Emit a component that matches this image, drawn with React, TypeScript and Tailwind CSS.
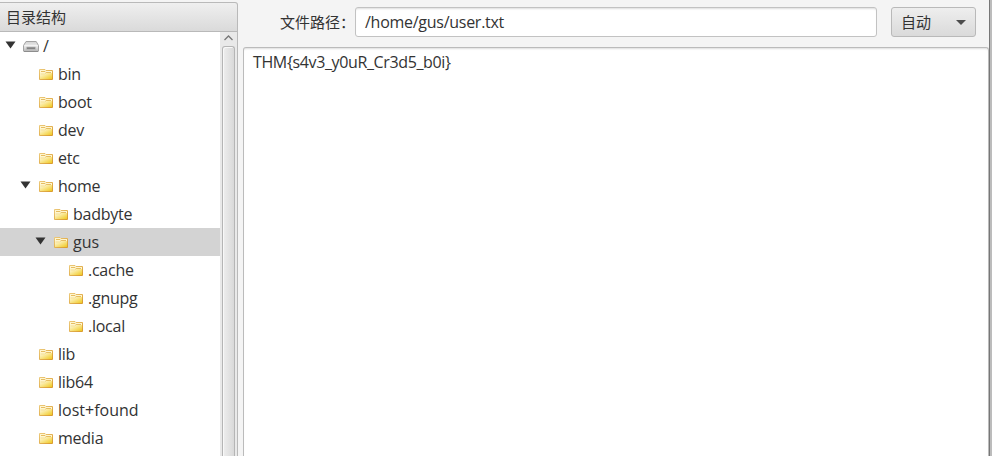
type Entry = { name: string; depth: number; open?: boolean; selected?: boolean; drive?: boolean; wide?: boolean };

const entries: Entry[] = [
  { name: "/", depth: 0, open: true, drive: true },
  { name: "bin", depth: 1 },
  { name: "boot", depth: 1 },
  { name: "dev", depth: 1 },
  { name: "etc", depth: 1 },
  { name: "home", depth: 1, open: true },
  { name: "badbyte", depth: 2 },
  { name: "gus", depth: 2, open: true, selected: true, wide: true },
  { name: ".cache", depth: 3 },
  { name: ".gnupg", depth: 3 },
  { name: ".local", depth: 3 },
  { name: "lib", depth: 1 },
  { name: "lib64", depth: 1 },
  { name: "lost+found", depth: 1, wide: true },
  { name: "media", depth: 1 },
];

const indents = ["pl-[5px]", "pl-[20px]", "pl-[35px]", "pl-[50px]"];

function FolderIcon() {
  return (
    <svg width="16" height="14" viewBox="0 0 16 14" className="mr-[4px] shrink-0">
      <defs>
        <linearGradient id="folder" x1="0" y1="0" x2="1" y2="1">
          <stop offset="0" stopColor="#fffbe2" />
          <stop offset=".45" stopColor="#f9e68f" />
          <stop offset="1" stopColor="#efc820" />
        </linearGradient>
        <linearGradient id="folderEdge" x1="0" y1="0" x2="1" y2="1">
          <stop offset="0" stopColor="#ecc97a" />
          <stop offset="1" stopColor="#d99a2c" />
        </linearGradient>
      </defs>
      <path d="M1.5 12.5V2.5h5.5l1 1h6.5v9z" fill="#fff6d0" stroke="url(#folderEdge)" />
      <path d="M3 4.5h4l1 1h5" fill="none" stroke="#e6bd62" />
      <path d="M2 12V7.5h5L8.5 6H14v6z" fill="url(#folder)" />
      <path d="M2.5 7h4.3L8.2 5.8" fill="none" stroke="#f3dc8c" />
    </svg>
  );
}

function DriveIcon() {
  return (
    <svg width="17" height="14" viewBox="0 0 17 14" className="mr-[3px] shrink-0">
      <defs>
        <linearGradient id="drive" x1="0" y1="0" x2="0" y2="1">
          <stop offset="0" stopColor="#d2d2d2" />
          <stop offset=".45" stopColor="#ebebeb" />
          <stop offset="1" stopColor="#b4b4b4" />
        </linearGradient>
      </defs>
      <path d="M3 2.5h10.2l2.3 4v5.5l-.5 .5H.9l-.4-.5V6.5z" fill="url(#drive)" stroke="#a3a3a3" />
      <path d="M1.5 6.5h13.2" stroke="#f3f3f3" />
      <path d="M3.5 8h9v2.5h-9z" fill="#838383" stroke="#c2c2c2" strokeWidth=".6" />
      <path d="M1 12.5h14.2" stroke="#8d8d8d" />
    </svg>
  );
}

function TreeRow({ entry }: { entry: Entry }) {
  return (
    <li className={`flex h-7 items-center ${indents[entry.depth]} ${entry.selected ? "bg-[#d3d3d3]" : ""}`}>
      <span className={`flex w-[18px] shrink-0 ${entry.drive ? "pb-[3px]" : "pb-[2px]"}`}>
        {entry.open && (
          <svg width="11" height="8" viewBox="0 0 11 8"><path d="M.5 .5h10l-5 7z" fill="#333" /></svg>
        )}
      </span>
      {entry.drive ? <DriveIcon /> : <FolderIcon />}
      <span className={`whitespace-pre text-[16px] leading-7 ${entry.wide ? "" : "tracking-[-0.25px]"}`}>{entry.name}</span>
    </li>
  );
}

export default function App() {
  return (
    <div className="flex h-[456px] w-[992px] overflow-hidden bg-[#f4f4f4] font-['Open_Sans','Noto_Sans_CJK_SC',sans-serif] text-[15px] text-[#333]">
      <aside className="flex w-[238px] shrink-0 flex-col pt-[2px]">
        <header className="h-[30px] shrink-0 rounded-tr-[3px] border-t border-r border-b border-[#b9b9b9] bg-linear-to-b from-[#efefef] to-[#dadada] pl-[6px] leading-[28px]">
          目录结构
        </header>
        <div className="flex min-h-0 flex-1 border-r border-[#b9b9b9]">
          <ul className="w-[220px] overflow-hidden bg-white">
            {entries.map((entry) => <TreeRow key={entry.name} entry={entry} />)}
          </ul>
          <div className="flex w-[17px] flex-col bg-[#e9e9e9] px-[2px]">
            <svg width="13" height="14" viewBox="0 0 13 14" className="shrink-0">
              <path d="M2.5 8l4-4 4 4" fill="none" stroke="#777" strokeWidth="1.3" />
            </svg>
            <div className="flex-1 rounded-t-[3px] border border-b-0 border-[#b5b5b5] bg-linear-to-r from-[#eeeeee] to-[#d9d9d9] shadow-[inset_1px_1px_0_#f8f8f8]" />
          </div>
        </div>
      </aside>
      <main className="flex flex-1 flex-col pl-[5px]">
        <div className="flex h-[47px] shrink-0 pt-[7px]">
          <label className="w-[112px] shrink-0 pl-[37px] leading-[30px] whitespace-nowrap">文件路径：</label>
          <div className="h-[30px] w-[522px] rounded-[3px] border border-[#c2c2c2] bg-white pl-[9px] text-[16px] leading-[28px] tracking-[-0.27px] shadow-[inset_0_2px_2px_-1px_#ddd]">
            <span>/home/gus/user.txt</span>
          </div>
          <button className="ml-[14px] flex h-[30px] w-[85px] items-center justify-between rounded-[3px] border border-[#b9b9b9] bg-linear-to-b from-[#eeeeee] to-[#dadada] pr-[9px] pl-[9px]">
            <span>自动</span>
            <svg width="10" height="5" viewBox="0 0 10 5"><path d="M0 0h10L5 5z" fill="#4c4c4c" /></svg>
          </button>
        </div>
        <div className="w-[746px] flex-1 rounded-t-[3px] border border-b-0 border-[#bbb] bg-white pl-[9px] text-[16px] leading-[28px] tracking-[-0.37px] shadow-[inset_0_2px_2px_-1px_#ddd]">
          <span>THM&#123;s4v3_y0uR_Cr3d5_b0i&#125;</span>
        </div>
      </main>
      <div className="w-[3px] shrink-0 border-l border-[#777] bg-[#bcbcbc]" />
    </div>
  );
}
